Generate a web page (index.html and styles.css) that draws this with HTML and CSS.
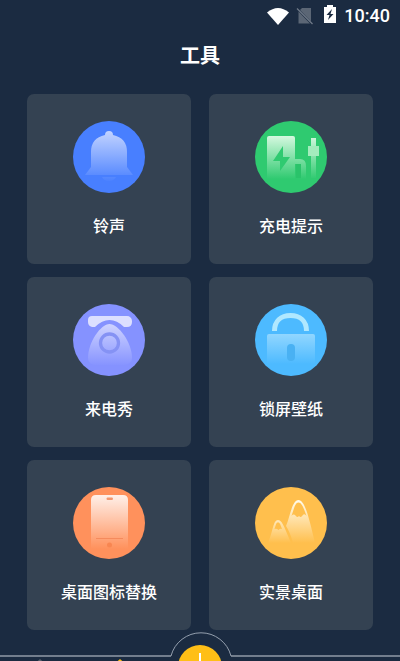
FILE: index.html
```html
<!DOCTYPE html>
<html lang="zh-CN">
<head>
    <meta charset="UTF-8">
    <meta name="viewport" content="width=device-width, initial-scale=1.0">
    <title>工具</title>
    <link rel="stylesheet" href="styles.css">
</head>
<body>
    <!-- Status bar -->
    <div class="status-bar">
        <svg class="wifi" width="22" height="18" viewBox="0 0 22 18">
            <path d="M0 5.500Q11-3.500 22 5.500L11 18Z" fill="#fff"/>
        </svg>
        <svg class="no-sim" width="18" height="18" viewBox="0 0 18 18">
            <path d="M6 1h9v13.500L4 3zM2.500 4.500L14 16.500H2.500z" fill="#5b6675"/>
            <path d="M1 1.500L16.500 17" stroke="#707a88" stroke-width="1.200"/>
        </svg>
        <svg class="battery" width="12" height="18" viewBox="0 0 12 18">
            <path d="M3 0h6v2h3v16H0V2h3z" fill="#fff"/>
            <path d="M8 4L2.500 10h3L4 15l5.500-6h-3z" fill="#1b2b41"/>
        </svg>
        <span class="time">10:40</span>
    </div>

    <h1 class="title">工具</h1>

    <main class="tools">
        <a class="card" href="#">
            <svg class="icon" viewBox="0 0 72 72">
                <defs>
                    <linearGradient id="bell" gradientUnits="userSpaceOnUse" x1="0" y1="9" x2="0" y2="62">
                        <stop offset="0" stop-color="#c5d5ff"/>
                        <stop offset="1" stop-color="#487fff"/>
                    </linearGradient>
                </defs>
                <circle cx="36" cy="36" r="36" fill="#487fff"/>
                <path d="M32 14a4 4 0 1 1 8 0Q54 17 54 31V46L60 54H12L18 46V31Q18 17 32 14ZM29 56h14q-2 4-7 4t-7-4Z" fill="url(#bell)"/>
            </svg>
            <span class="label">铃声</span>
        </a>

        <a class="card" href="#">
            <svg class="icon" viewBox="0 0 72 72">
                <defs>
                    <linearGradient id="charge" gradientUnits="userSpaceOnUse" x1="0" y1="15" x2="0" y2="58">
                        <stop offset="0" stop-color="#d5f8df"/>
                        <stop offset="1" stop-color="#2fca70"/>
                    </linearGradient>
                </defs>
                <circle cx="36" cy="36" r="36" fill="#2fca70"/>
                <path d="M14 15h24q2 0 2 2v41H12V17q0-2 2-2Z" fill="url(#charge)"/>
                <path d="M28 25L18 40h7v10l10-14h-7z" fill="#2fca70"/>
                <path d="M40 38h5q6 0 6 7v13h-5V46q0-3-3-3h-3z" fill="url(#charge)"/>
                <path d="M41 43h5v14h-5z" fill="#2ac36a"/>
                <path d="M56 17h5v8h3v10h-3v22h-5V35h-3V25h3z" fill="url(#charge)"/>
                <path d="M53 25h11v10H53z" fill="#a4ecbd"/>
            </svg>
            <span class="label">充电提示</span>
        </a>

        <a class="card" href="#">
            <svg class="icon" viewBox="0 0 72 72">
                <defs>
                    <linearGradient id="call" gradientUnits="userSpaceOnUse" x1="0" y1="16" x2="0" y2="62">
                        <stop offset="0" stop-color="#d5d9ff"/>
                        <stop offset="1" stop-color="#8592ff"/>
                    </linearGradient>
                </defs>
                <circle cx="36" cy="36" r="36" fill="#8592ff"/>
                <path d="M19 12H54a5 5 0 0 1 5 5v1q0 5-5 5h-3Q44 16 36.500 16T22 23h-3q-4-1-4-5v-2q0-4 4-4Z" fill="#dcdfff"/>
                <path d="M36.500 20C45 20 59 38 59 54q0 6-8 7H22q-7-1-7-7C15 38 28 20 36.500 20Z" fill="url(#call)"/>
                <circle cx="36.500" cy="39" r="9" fill="none" stroke="#8592f4" stroke-width="3.300"/>
            </svg>
            <span class="label">来电秀</span>
        </a>

        <a class="card" href="#">
            <svg class="icon" viewBox="0 0 72 72">
                <defs>
                    <linearGradient id="lock" gradientUnits="userSpaceOnUse" x1="0" y1="30" x2="0" y2="60">
                        <stop offset="0" stop-color="#91d6ff"/>
                        <stop offset="1" stop-color="#4dbaff"/>
                    </linearGradient>
                </defs>
                <circle cx="36" cy="36" r="36" fill="#4dbaff"/>
                <path d="M19.500 27C19.500 17 26 11.500 35.500 11.500S51.500 17 51.500 27" fill="none" stroke="#b0e8ff" stroke-width="5"/>
                <path d="M14 30h44q2 0 2 2v28H12V32q0-2 2-2Z" fill="url(#lock)"/>
                <rect x="32" y="40" width="8" height="17" rx="4" fill="#49b1f3"/>
            </svg>
            <span class="label">锁屏壁纸</span>
        </a>

        <a class="card" href="#">
            <svg class="icon" viewBox="0 0 72 72">
                <defs>
                    <linearGradient id="phone" gradientUnits="userSpaceOnUse" x1="0" y1="8" x2="0" y2="62">
                        <stop offset="0" stop-color="#fff0e9"/>
                        <stop offset="1" stop-color="#ff915c"/>
                    </linearGradient>
                </defs>
                <circle cx="36" cy="36" r="36" fill="#ff915c"/>
                <path d="M23 8h27q5 0 5 5v49H18V13q0-5 5-5Z" fill="url(#phone)"/>
                <rect x="33.500" y="10.500" width="6.500" height="2.500" rx="1.200" fill="#f29770"/>
                <path d="M23 51.500h27" stroke="#f58b5d" stroke-width="1"/>
                <circle cx="36.500" cy="58" r="2.500" fill="#f88651"/>
            </svg>
            <span class="label">桌面图标替换</span>
        </a>

        <a class="card" href="#">
            <svg class="icon" viewBox="0 0 72 72">
                <defs>
                    <linearGradient id="peak" gradientUnits="userSpaceOnUse" x1="0" y1="13" x2="0" y2="56">
                        <stop offset="0" stop-color="#fffbed"/>
                        <stop offset="1" stop-color="#ffbf4d"/>
                    </linearGradient>
                    <linearGradient id="hill" gradientUnits="userSpaceOnUse" x1="0" y1="31" x2="0" y2="56">
                        <stop offset="0" stop-color="#ffecc4"/>
                        <stop offset="1" stop-color="#ffbf4d"/>
                    </linearGradient>
                </defs>
                <circle cx="36" cy="36" r="36" fill="#ffbf4d"/>
                <path d="M31 39C35 30 37 13 43.500 13S54 31 60 56H38Q35 45 31 39Z" fill="url(#peak)"/>
                <path d="M36.500 29C39 22 40 15.500 43.500 15.500S49 22 51.500 29q-2-3-4-.5-1.500 2.500-3.500.500-2 2-3.500-.5-2-2-4 .5Z" fill="#ffbf4d"/>
                <path d="M13 56C18 45 18 33 23 33S31 45 36 56Z" fill="url(#hill)"/>
                <path d="M19.500 42C21 38 21 35.500 23 35.500S25.500 38 27 42q-2-1-3.500 1-2-2-4-1Z" fill="#ffbf4d"/>
            </svg>
            <span class="label">实景桌面</span>
        </a>
    </main>

    <!-- Bottom navigation, mostly below the fold -->
    <nav class="tab-bar">
        <a class="tab" href="#" aria-label="首页">
            <svg width="18" height="18" viewBox="0 0 18 18"><path d="M9 0L18 8V18H0V8Z" fill="#59636f"/></svg>
        </a>
        <a class="tab" href="#" aria-label="工具">
            <svg width="18" height="18" viewBox="0 0 18 18"><path d="M9 0L18 8V18H0V8Z" fill="#ffbf16"/></svg>
        </a>
        <div class="add-slot">
            <svg class="add-arc" width="62" height="26" viewBox="0 0 62 26">
                <path d="M1 24A31 31 0 0 1 61 24V26H1Z" fill="#1b2b41"/>
                <path d="M1 24A31 31 0 0 1 61 24" fill="none" stroke="#95a0ae" stroke-width="1"/>
            </svg>
            <button class="add" type="button" aria-label="添加">
                <svg width="28" height="28" viewBox="0 0 28 28"><path d="M14 0V28M0 14H28" stroke="#fff" stroke-width="2"/></svg>
            </button>
        </div>
        <a class="tab" href="#" aria-label="发现"></a>
        <a class="tab" href="#" aria-label="我的"></a>
    </nav>
</body>
</html>
```

FILE: styles.css
```css
/* General Reset */
* {
    margin: 0;
    padding: 0;
    box-sizing: border-box;
}

body {
    font-family: Roboto, "Noto Sans CJK SC", sans-serif;
    background: #1b2b41;
    color: #fff;
    min-height: 100vh;
}

/* Status bar */
.status-bar {
    display: flex;
    align-items: center;
    justify-content: flex-end;
    height: 32px;
    padding-right: 10px;
}

.wifi {
    margin-right: 7px;
}

.no-sim {
    margin-right: 10px;
}

.battery {
    margin-right: 8px;
    margin-bottom: 4px;
}

.time {
    font-size: 18px;
    font-weight: 500;
    line-height: 34px;
}

.title {
    font-size: 20px;
    font-weight: 700;
    line-height: 48px;
    text-align: center;
}

/* Tool cards */
.tools {
    display: grid;
    grid-template-columns: 1fr 1fr;
    gap: 13px 18px;
    padding: 14px 27px 31px;
}

.card {
    display: flex;
    flex-direction: column;
    align-items: center;
    gap: 22px;
    padding: 27px 0 25px;
    background: #344252;
    border-radius: 7px;
    color: #fff;
    text-decoration: none;
}

.icon {
    width: 72px;
    height: 72px;
}

.label {
    font-size: 16px;
    font-weight: 500;
    line-height: 24px;
}

/* Bottom navigation */
.tab-bar {
    position: fixed;
    left: 0;
    right: 0;
    bottom: -50px;
    display: flex;
    height: 56px;
    background: #1b2b41;
    border-top: 2px solid #737e8d;
}

.tab {
    flex: 1;
    padding-top: 2px;
    text-align: center;
}

.add-slot {
    position: relative;
    flex: 1;
}

.add-arc {
    position: absolute;
    left: 50%;
    top: -25px;
    margin-left: -30px;
}

.add {
    position: absolute;
    left: 50%;
    top: -12px;
    display: flex;
    align-items: center;
    justify-content: center;
    width: 44px;
    height: 44px;
    margin-left: -22px;
    background: #ffbf16;
    border: none;
    border-radius: 50%;
}
```
